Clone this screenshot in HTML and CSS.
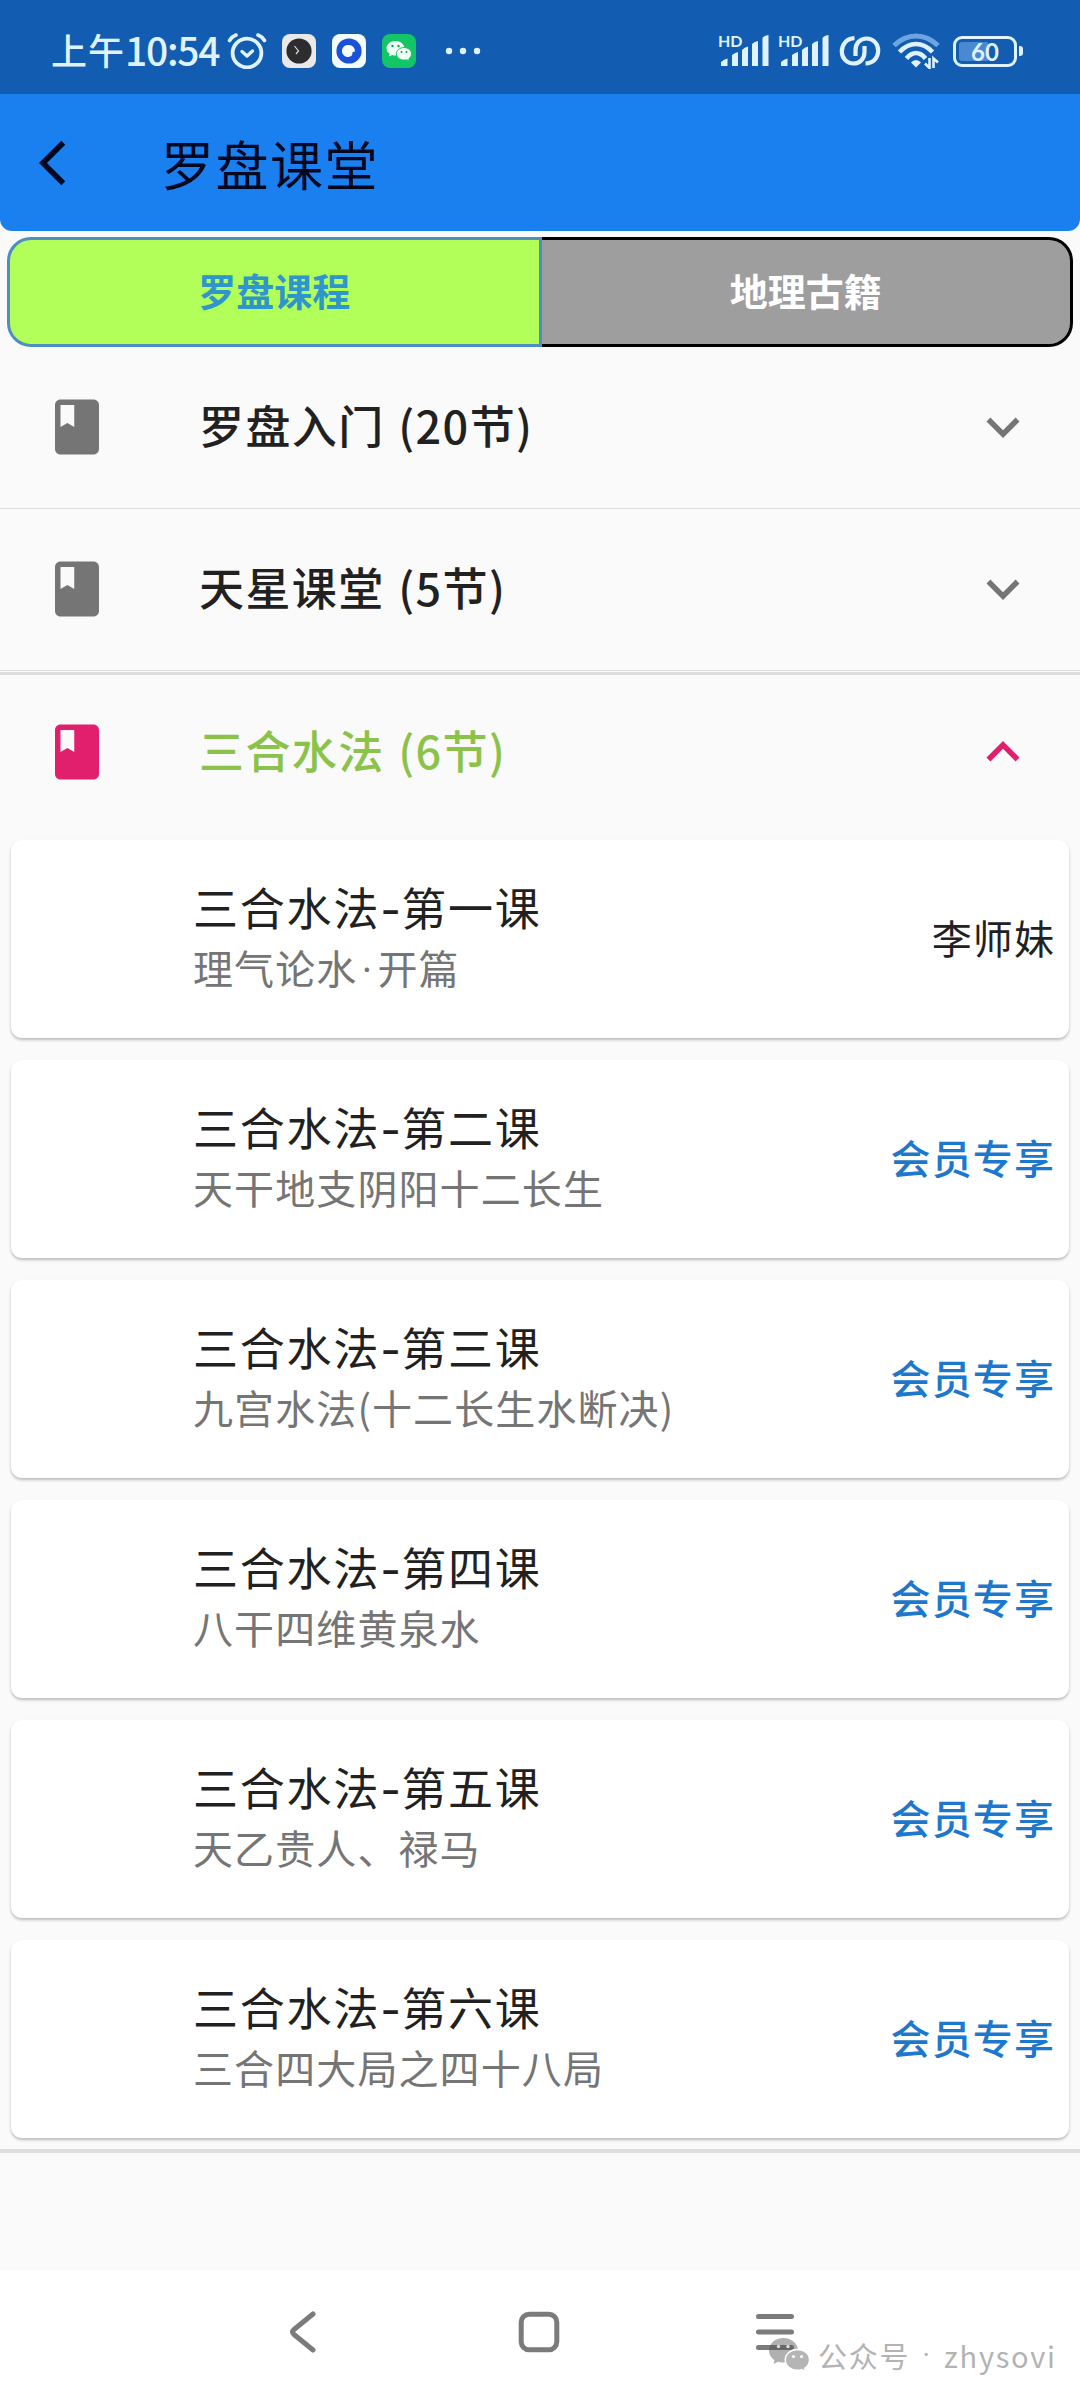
FILE: index.html
```html
<!DOCTYPE html>
<html lang="zh-CN">
  <head>
    <meta charset="UTF-8" />
    <meta name="viewport" content="width=device-width, initial-scale=1.0" />
    <title>罗盘课堂</title>

    <link rel="stylesheet" href="styles.css">
  </head>
  <body>
    <div class="status-bar">
      <div class="status-left">
        <span class="time"><span class="ampm">上午</span>10:54</span>
        <svg class="alarm" width="40" height="36" viewBox="0 0 40 36" fill="none" stroke="#dff2ff" stroke-linecap="round">
          <circle cx="20" cy="20" r="14.4" stroke-width="3.8" />
          <path d="M2.5 7.5Q5 3.5 9 2M37.500 7.500Q35 3.500 31 2" stroke-width="3.6" />
          <path d="M15 18.500L20 23L25.500 18" stroke-width="3.4" stroke-linejoin="round" />
        </svg>
        <svg class="app-icon" width="34" height="34" viewBox="0 0 34 34">
          <rect width="34" height="34" rx="8" fill="#e9e9e9" />
          <circle cx="17" cy="17" r="12.600" fill="#2d2d2f" />
          <path d="M12.500 12L16.500 17L14 20" fill="none" stroke="#ddd" stroke-width="1.200" />
        </svg>
        <svg class="app-icon" width="34" height="34" viewBox="0 0 34 34">
          <rect width="34" height="34" rx="8" fill="#f4fbff" />
          <circle cx="17" cy="17" r="12.600" fill="#1951d8" />
          <path d="M17 11a6 6 0 0 1 6 6.500l-2.300.500-.7 3.300A6 6 0 1 1 17 11z" fill="#f4fbff" />
        </svg>
        <svg class="app-icon" width="34" height="34" viewBox="0 0 34 34">
          <rect width="34" height="34" rx="8" fill="#13c566" />
          <path d="M13.500 7C8.500 7 4.500 10.200 4.500 14.300c0 2.300 1.200 4.200 3.200 5.500L7 22.500l3.200-1.600q1.600.500 3.300.500c5 0 9-3.200 9-7.100S18.500 7 13.500 7z" fill="#effff6" />
          <path d="M22 13.500c-4.300 0-7.500 2.800-7.500 6.300s3.200 6.300 7.500 6.300q1.400 0 2.700-.400l2.700 1.500-.600-2.400c1.700-1.200 2.700-2.900 2.700-5 0-3.500-3.400-6.300-7.500-6.300z" fill="#effff6" stroke="#13c566" />
          <g fill="#13a556">
            <circle cx="10.500" cy="12" r="1.200" /><circle cx="16.500" cy="12" r="1.200" />
            <circle cx="19.500" cy="18" r="1" /><circle cx="24.500" cy="18" r="1" />
          </g>
        </svg>
        <svg class="dots" width="36" height="8" viewBox="0 0 36 8" fill="#dff2ff">
          <circle cx="4" cy="4" r="3.200" /><circle cx="18" cy="4" r="3.200" /><circle cx="32" cy="4" r="3.200" />
        </svg>
      </div>

      <div class="status-right">
        <div class="signal">
          <span class="hd">HD</span>
          <svg width="48" height="32" viewBox="0 0 48 32" fill="#dff2ff">
            <path d="M0 31V27Q3 24 6.500 23.500V31zM11 31V20Q13.500 18 17 17V31zM21 31V15Q23.500 12 27 11.500V31zM31 31V9Q33.500 6.500 37 6V31zM41.500 31V3Q43 .5 47.500 0V31z" />
          </svg>
        </div>
        <div class="signal">
          <span class="hd">HD</span>
          <svg width="48" height="32" viewBox="0 0 48 32" fill="#dff2ff">
            <path d="M0 31V27Q3 24 6.500 23.500V31zM11 31V20Q13.500 18 17 17V31zM21 31V15Q23.500 12 27 11.500V31zM31 31V9Q33.500 6.500 37 6V31zM41.500 31V3Q43 .5 47.500 0V31z" />
          </svg>
        </div>
        <svg class="link" width="42" height="32" viewBox="0 0 42 32" fill="none" stroke="#dff2ff" stroke-width="4.200">
          <path d="M15.500 3.200C7.500 3.500 2.800 9.500 2.800 16.500S8 28.500 14.500 28.500 25.500 23.500 25.500 17V11" />
          <path d="M26.500 28.500C34.500 28.200 39.200 22.500 39.200 15.500S34 3.500 27.500 3.500 16.500 8.500 16.500 15V21" />
        </svg>
        <svg class="wifi" width="48" height="36" viewBox="0 0 48 36" fill="none" stroke="#dff2ff">
          <path d="M2 12.500Q12 3 24 3t22 9.500" stroke="#6da5e3" stroke-width="5" />
          <path d="M7.500 19Q15 11 24 11t16.500 8" stroke-width="4.600" />
          <path d="M14.500 25.500Q19 20 24 20t9.500 5.500" stroke-width="4.600" />
          <path d="M24 34.500l-5-5Q21 27 24 27t5 2.500z" fill="#dff2ff" stroke="none" />
          <path d="M37.500 25V35L33 30.500M41.500 35V25.500L46 29.500" stroke-width="2.600" />
        </svg>
        <div class="battery"><span class="battery-body">60</span><span class="battery-cap"></span></div>
      </div>
    </div>

    <header class="app-bar">
      <svg class="back" width="54" height="54" viewBox="0 0 24 24" fill="#000820">
        <path d="M11.670 3.870L9.900 2.100 0 12l9.900 9.900 1.770-1.770L3.540 12z" />
      </svg>
      <h1>罗盘课堂</h1>
    </header>

    <div class="tabs">
      <div class="tab active">罗盘课程</div>
      <div class="tab">地理古籍</div>
    </div>

    <main>
      <div class="section">
        <svg class="book" viewBox="0 0 24 24"><path d="M18 2H6c-1.100 0-2 .900-2 2v16c0 1.100.900 2 2 2h12c1.100 0 2-.900 2-2V4c0-1.100-.900-2-2-2zM6 4h5v8l-2.500-1.500L6 12V4z" /></svg>
        <h2>罗盘入门 (20节)</h2>
        <svg class="chevron" viewBox="0 0 24 24"><path d="M16.590 8.590L12 13.170 7.410 8.590 6 10l6 6 6-6z" /></svg>
      </div>
      <div class="section">
        <svg class="book" viewBox="0 0 24 24"><path d="M18 2H6c-1.100 0-2 .900-2 2v16c0 1.100.900 2 2 2h12c1.100 0 2-.900 2-2V4c0-1.100-.900-2-2-2zM6 4h5v8l-2.500-1.500L6 12V4z" /></svg>
        <h2>天星课堂 (5节)</h2>
        <svg class="chevron" viewBox="0 0 24 24"><path d="M16.590 8.590L12 13.170 7.410 8.590 6 10l6 6 6-6z" /></svg>
      </div>

      <div class="expanded">
        <div class="section open">
          <svg class="book" viewBox="0 0 24 24"><path d="M18 2H6c-1.100 0-2 .900-2 2v16c0 1.100.900 2 2 2h12c1.100 0 2-.900 2-2V4c0-1.100-.900-2-2-2zM6 4h5v8l-2.500-1.500L6 12V4z" /></svg>
          <h2>三合水法 (6节)</h2>
          <svg class="chevron" viewBox="0 0 24 24"><path d="M12 8l-6 6 1.410 1.410L12 10.830l4.590 4.580L18 14z" /></svg>
        </div>

        <div class="lessons">
          <div class="card">
            <div class="info">
              <h3>三合水法<span class="dash">-</span>第一课</h3>
              <p>理气论水<span class="mid">·</span>开篇</p>
            </div>
            <span class="teacher">李师妹</span>
          </div>
          <div class="card">
            <div class="info">
              <h3>三合水法<span class="dash">-</span>第二课</h3>
              <p>天干地支阴阳十二长生</p>
            </div>
            <span class="vip">会员专享</span>
          </div>
          <div class="card">
            <div class="info">
              <h3>三合水法<span class="dash">-</span>第三课</h3>
              <p>九宫水法(十二长生水断决)</p>
            </div>
            <span class="vip">会员专享</span>
          </div>
          <div class="card">
            <div class="info">
              <h3>三合水法<span class="dash">-</span>第四课</h3>
              <p>八干四维黄泉水</p>
            </div>
            <span class="vip">会员专享</span>
          </div>
          <div class="card">
            <div class="info">
              <h3>三合水法<span class="dash">-</span>第五课</h3>
              <p>天乙贵人、禄马</p>
            </div>
            <span class="vip">会员专享</span>
          </div>
          <div class="card">
            <div class="info">
              <h3>三合水法<span class="dash">-</span>第六课</h3>
              <p>三合四大局之四十八局</p>
            </div>
            <span class="vip">会员专享</span>
          </div>
        </div>
      </div>
    </main>

    <nav class="nav-bar">
      <svg width="40" height="42" viewBox="0 0 40 42"><path d="M30 3L11 18.500Q8 21 11 23.500L30 39" /></svg>
      <svg width="42" height="42" viewBox="0 0 42 42"><rect x="3.200" y="3.200" width="35.600" height="35.600" rx="8" /></svg>
      <svg width="40" height="42" viewBox="0 0 40 42"><path d="M3.500 5.500H36.500M3.500 21H36.500M3.500 36.500H36.500" /></svg>
      <div class="watermark">
        <svg width="42" height="34" viewBox="0 0 42 34">
          <path d="M14.500 0C6.500 0 0 5.400 0 12.500c0 4 2 7.500 5.500 9.800L4.500 26l4.700-2.300q2.500.900 5.300.900C22.500 24.600 29 19.400 29 12.500S22.500 0 14.500 0z" fill="#505050" fill-opacity=".45" />
          <path d="M28.500 11.500c-7 0-12.200 4.600-12.200 10.400s5.200 10.400 12.200 10.400q2.200 0 4.200-.700l4 2-1-3.200c3-2 4.800-5 4.800-8.500 0-5.800-5-10.400-12-10.400z" fill="#b5b5b5" stroke="#fff" stroke-width="1.500" />
          <circle cx="9.500" cy="8.500" r="1.700" fill="#ddd" /><circle cx="19" cy="8.500" r="1.700" fill="#ddd" />
          <circle cx="24.500" cy="18.500" r="1.600" fill="#fff" /><circle cx="32.500" cy="18.500" r="1.600" fill="#fff" />
        </svg>
        <span>公众号</span>
        <span class="sep">·</span>
        <span>zhysovi</span>
      </div>
    </nav>
  </body>
</html>
```

FILE: styles.css
```css
* {
  box-sizing: border-box;
}

body {
  margin: 0;
  width: 1080px;
  height: 2400px;
  display: flex;
  flex-direction: column;
  background: #fafafa;
  color: #212121;
  font-family: "Noto Sans CJK SC", sans-serif;
  overflow: hidden;
}

h1,
h2,
h3,
p {
  margin: 0;
}

svg {
  display: block;
  flex: none;
}

/* status bar */
.status-bar {
  height: 94px;
  padding: 8px 57px 0 51px;
  display: flex;
  justify-content: space-between;
  align-items: center;
  background: #125cb1;
  color: #dff2ff;
}

.status-left,
.status-right {
  display: flex;
  align-items: center;
}

.time {
  display: flex;
  align-items: center;
  width: 176px;
  padding-bottom: 4px;
  font-size: 39px;
  line-height: 40px;
  font-weight: 500;
  letter-spacing: -1.3px;
  white-space: nowrap;
}

.ampm {
  font-size: 36px;
  letter-spacing: 1px;
}

.app-icon {
  margin-left: 16px;
}

.alarm + .app-icon {
  margin-left: 15px;
}

.dots {
  margin-left: 29px;
}

.signal {
  position: relative;
  width: 60px;
  padding-left: 3px;
}

.hd {
  position: absolute;
  left: 0;
  top: -2px;
  font: 700 16px/16px "Lato", sans-serif;
}

.link {
  margin-left: 1px;
}

.wifi {
  margin-left: 11px;
}

.battery {
  margin-left: 13px;
  display: flex;
  align-items: center;
  gap: 2px;
}

.battery-body {
  width: 64px;
  height: 31px;
  border: 3px solid #dff2ff;
  border-radius: 9px;
  background: linear-gradient(90deg, #4a88cf 56%, transparent 56%) content-box;
  padding: 3px;
  font: 700 24px/19px "Lato", sans-serif;
  text-align: center;
}

.battery-cap {
  width: 4px;
  height: 10px;
  border-radius: 0 3px 3px 0;
  background: #dff2ff;
}

/* app bar */
.app-bar {
  height: 137px;
  padding-left: 39px;
  display: flex;
  align-items: center;
  gap: 68px;
  background: #1a80f0;
  border-radius: 0 0 12px 12px;
  color: #000820;
}

h1 {
  font-size: 53px;
  line-height: 60px;
  font-weight: 400;
  letter-spacing: 1.5px;
}

/* tabs */
.tabs {
  display: flex;
  margin: 6px 7px 0;
  height: 110px;
}

.tab {
  flex: 1;
  display: flex;
  align-items: center;
  justify-content: center;
  padding-bottom: 5px;
  background: #9e9e9e;
  border: 3px solid #000;
  border-left: 0;
  border-radius: 0 24px 24px 0;
  color: #fff;
  font-size: 38px;
  font-weight: 700;
}

.tab.active {
  background: #b2ff59;
  border: 3px solid #4c8fc0;
  border-radius: 24px 0 0 24px;
  color: #2f95cd;
}

/* course sections */
.section {
  height: 162px;
  padding: 0 44px;
  display: flex;
  align-items: center;
  border-bottom: 1px solid #dcdcdc;
}

.book,
.chevron {
  width: 66px;
  height: 66px;
  margin-bottom: 1px;
  fill: #757575;
}

h2 {
  flex: 1;
  margin-left: 89px;
  padding-bottom: 5px;
  font-size: 45px;
  line-height: 60px;
  font-weight: 500;
  letter-spacing: 1.4px;
  word-spacing: 2px;
}

.expanded {
  margin-top: 1px;
  border-top: 3px solid #dedede;
  border-bottom: 4px solid #dedede;
}

.section.open {
  height: 154px;
  border-bottom: 0;
  color: #8bc34a;
}

.open svg {
  fill: #e21f6c;
}

.lessons {
  padding: 11px;
  display: flex;
  flex-direction: column;
  gap: 22px;
}

.card {
  height: 198px;
  padding: 0 14px 4px 182px;
  display: flex;
  align-items: center;
  justify-content: space-between;
  background: #fff;
  border-radius: 11px;
  box-shadow: 0 2px 3px rgba(0, 0, 0, 0.25);
  font-size: 40px;
  letter-spacing: 1.1px;
}

h3 {
  font-size: 45px;
  line-height: 60px;
  font-weight: 400;
  letter-spacing: 1.8px;
}

.dash {
  display: inline-block;
  width: 21px;
  font-family: "Inter", sans-serif;
  line-height: 1;
  text-align: center;
}

.info p {
  color: #757575;
  line-height: 60px;
}

.mid {
  display: inline-block;
  width: 20px;
  font-family: "Roboto", sans-serif;
  line-height: 1;
  text-align: center;
}

.vip {
  color: #1c78cc;
  font-weight: 500;
}

/* system navigation */
.nav-bar {
  position: relative;
  margin-top: auto;
  height: 130px;
  padding: 0 2px 7px 0;
  display: flex;
  align-items: center;
  justify-content: center;
  gap: 195px;
  background: #fff;
}

.nav-bar > svg {
  fill: none;
  stroke: #7b7b7b;
  stroke-width: 5;
  stroke-linecap: round;
}

.watermark {
  position: absolute;
  left: 769px;
  top: 65px;
  display: flex;
  align-items: center;
  gap: 7px;
  color: #b3b3b3;
  font-size: 29px;
  line-height: 40px;
  letter-spacing: 1.7px;
  white-space: nowrap;
}

.sep {
  width: 20px;
  font-family: "Roboto", sans-serif;
  text-align: center;
}
```
